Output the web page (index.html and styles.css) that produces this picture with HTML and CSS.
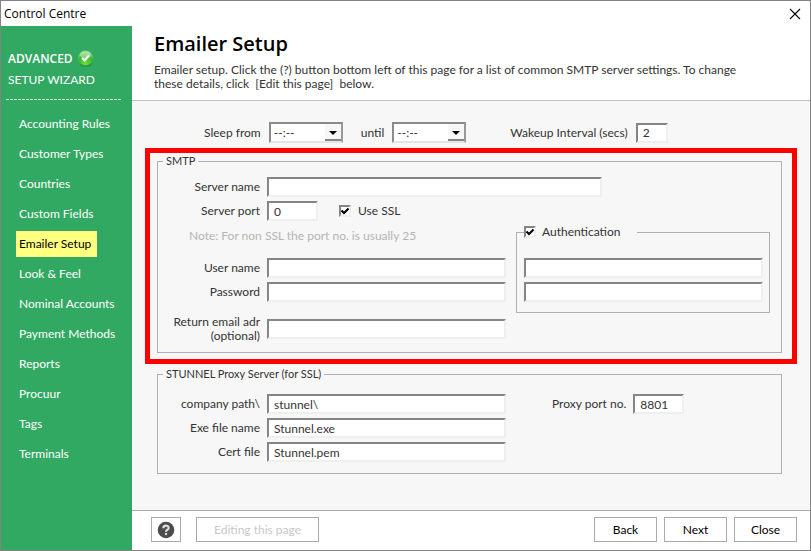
FILE: index.html
```html
<!DOCTYPE html>
<html lang="en">
<head>
  <meta charset="UTF-8">
  <title>Control Centre</title>
  <link rel="stylesheet" href="styles.css">
</head>
<body>
  <div class="window">

    <div class="titlebar">
      <span>Control Centre</span>
      <button type="button" class="close" aria-label="Close window">
        <svg width="12" height="12" viewBox="0 0 12 12"><path d="M1 1L11 11M11 1L1 11" stroke="#000" stroke-width="1.1" fill="none"/></svg>
      </button>
    </div>

    <nav class="sidebar">
      <div class="wizard">
        <strong>ADVANCED</strong>
        <svg width="18" height="18" viewBox="0 0 18 18">
          <defs>
            <radialGradient id="ball" cx="0.5" cy="0.85" r="0.8">
              <stop offset="0" stop-color="#6fe03c"/>
              <stop offset="0.6" stop-color="#35b82a"/>
              <stop offset="1" stop-color="#8fd488"/>
            </radialGradient>
          </defs>
          <ellipse cx="9" cy="14" rx="6" ry="3" fill="#1f7a3c" opacity="0.5"/>
          <circle cx="8.5" cy="8" r="7.5" fill="url(#ball)"/>
          <ellipse cx="8.5" cy="5" rx="5.5" ry="3.5" fill="#fff" opacity="0.4"/>
          <path d="M5 8L7.500 10.500L12 5.500" stroke="#fff" stroke-width="2.200" fill="none"/>
        </svg>
      </div>
      <div class="wizard">SETUP WIZARD</div>
      <hr class="dashes">
      <ul class="menu">
        <li><a href="#">Accounting Rules</a></li>
        <li><a href="#">Customer Types</a></li>
        <li><a href="#">Countries</a></li>
        <li><a href="#">Custom Fields</a></li>
        <li><a href="#" class="active">Emailer Setup</a></li>
        <li><a href="#">Look &amp; Feel</a></li>
        <li><a href="#">Nominal Accounts</a></li>
        <li><a href="#">Payment Methods</a></li>
        <li><a href="#">Reports</a></li>
        <li><a href="#">Procuur</a></li>
        <li><a href="#">Tags</a></li>
        <li><a href="#">Terminals</a></li>
      </ul>
    </nav>

    <form class="page" id="emailerForm">
      <header class="header">
        <h1>Emailer Setup</h1>
        <p>Emailer setup. Click the (?) button bottom left of this page for a list of common SMTP server settings. To change these details, click &nbsp;[Edit this page]&nbsp; below.</p>
      </header>

      <div class="content">
        <div class="sleep">
          <label for="sleepFrom">Sleep from</label>
          <select id="sleepFrom"><option>--:--</option></select>
          <label for="sleepUntil" class="until">until</label>
          <select id="sleepUntil"><option>--:--</option></select>
          <label for="wakeup" class="wakeup">Wakeup Interval (secs)</label>
          <input type="text" id="wakeup" class="tiny" value="2">
        </div>

        <div class="highlight">
          <fieldset class="group">
            <legend>SMTP</legend>
            <div class="fields server">
              <label for="serverName">Server name</label>
              <input type="text" id="serverName">
              <label for="serverPort">Server port</label>
              <div class="inline">
                <input type="text" id="serverPort" class="short" value="0">
                <input type="checkbox" id="useSsl" class="ssl" checked>
                <label for="useSsl">Use SSL</label>
              </div>
            </div>

            <div class="accounts">
              <div>
                <p class="note">Note: For non SSL the port no. is usually 25</p>
                <div class="fields">
                  <label for="userName">User name</label>
                  <input type="text" id="userName">
                  <label for="password">Password</label>
                  <input type="text" id="password">
                </div>
                <div class="fields return">
                  <label for="returnAdr">Return email adr (optional)</label>
                  <input type="text" id="returnAdr">
                </div>
              </div>
              <fieldset class="auth">
                <legend>
                  <input type="checkbox" id="auth" checked>
                  <label for="auth">Authentication</label>
                </legend>
                <input type="text" aria-label="Authentication user name">
                <input type="text" aria-label="Authentication password">
              </fieldset>
            </div>
          </fieldset>
        </div>

        <fieldset class="group stunnel">
          <legend>STUNNEL Proxy Server (for SSL)</legend>
          <div class="fields">
            <label for="companyPath">company path\</label>
            <input type="text" id="companyPath" value="stunnel\">
            <label for="exeFile">Exe file name</label>
            <input type="text" id="exeFile" value="Stunnel.exe">
            <label for="certFile">Cert file</label>
            <input type="text" id="certFile" value="Stunnel.pem">
          </div>
          <div class="inline proxy">
            <label for="proxyPort">Proxy port no.</label>
            <input type="text" id="proxyPort" class="short" value="8801">
          </div>
        </fieldset>
      </div>

      <footer class="footer">
        <button type="button" class="help" aria-label="Help">
          <svg width="18" height="18" viewBox="0 0 18 18">
            <circle cx="9" cy="9" r="8.300" fill="#4c4c4c"/>
            <path d="M6.300 7.200C6.300 3.900 11.600 3.900 11.600 6.900C11.600 8.900 9 8.600 9 10.700" stroke="#ddd" stroke-width="2.200" fill="none"/>
            <circle cx="9" cy="13" r="1.200" fill="#ddd"/>
          </svg>
        </button>
        <button type="button" class="editing" disabled>Editing this page</button>
        <button type="button" class="step back">Back</button>
        <button type="button" class="step">Next</button>
        <button type="button" class="step">Close</button>
      </footer>
    </form>

  </div>
</body>
</html>
```
FILE: styles.css
```css
* {
  box-sizing: border-box;
}
body {
  margin: 0;
  font-family: Lato, "Noto Sans", sans-serif;
  font-size: 12px;
  line-height: 14px;
  color: #333;
}
.window {
  display: grid;
  grid-template-columns: 131px 1fr;
  grid-template-rows: 25px 1fr;
  min-height: 100vh;
  border: 1px solid #838383;
  background: #fff;
}

/* title bar */
.titlebar {
  grid-column: 1 / 3;
  display: flex;
  justify-content: space-between;
  align-items: center;
  padding: 0 9px 0 3px;
  font-family: "Open Sans", sans-serif;
  color: #000;
}
.close {
  display: flex;
  padding: 0;
  border: none;
  background: none;
}

/* sidebar */
.sidebar {
  padding-top: 22px;
  background: #32a962;
  color: #fff;
}
.wizard {
  display: flex;
  align-items: center;
  gap: 4px;
  height: 21px;
  padding-left: 7px;
}
.wizard strong {
  font-family: "Open Sans", sans-serif;
  font-weight: 600;
}
.dashes {
  height: 1px;
  margin: 9px 11px 9px 5px;
  border: none;
  background: repeating-linear-gradient(to right, #d6eedf 0 3px, transparent 3px 4px);
}
.menu {
  margin: 0;
  padding: 0 0 0 15px;
  list-style: none;
}
.menu li {
  display: flex;
  align-items: center;
  height: 30px;
}
.menu a {
  padding: 6px 3px;
  color: #fff;
  text-decoration: none;
}
.menu .active {
  padding-right: 6px;
  background: #ffff80;
  color: #000;
}

/* page */
.page {
  display: flex;
  flex-direction: column;
}
.header {
  height: 75px;
  padding: 5px 48px 0 22px;
  border-bottom: 1px solid #c0c0c0;
}
h1 {
  margin: 0 0 6px;
  font-family: "Open Sans", sans-serif;
  font-size: 20px;
  font-weight: 600;
  line-height: 26px;
  color: #000;
}
.header p {
  margin: 0;
}
.content {
  flex: 1;
  padding: 21px 13px;
  background: #f7f7f7;
}
input, select, button {
  font: inherit;
  color: inherit;
}
input[type="text"] {
  width: 100%;
  height: 20px;
  padding: 0 5px;
  border: 2px solid;
  border-color: #858585 #efefef #efefef #858585;
  background: #fff;
}
input[type="checkbox"] {
  appearance: none;
  width: 12px;
  height: 12px;
  margin: 0;
  border: 2px solid;
  border-color: #858585 #efefef #efefef #858585;
  background: #fff;
}
input[type="checkbox"]:checked {
  background: #fff url("data:image/svg+xml,%3Csvg xmlns='http://www.w3.org/2000/svg' viewBox='0 0 8 8'%3E%3Cpath d='M.5 3.500L3 6L7.500 1.500' stroke='%23000' stroke-width='2' fill='none'/%3E%3C/svg%3E") center / 8px no-repeat;
}
select {
  appearance: none;
  width: 74px;
  height: 21px;
  padding: 0 3px;
  border: 2px solid #8a8a8a;
  border-right-color: #999;
  border-bottom-color: #e4e4e4;
  border-radius: 0;
  background: #fff url("data:image/svg+xml,%3Csvg xmlns='http://www.w3.org/2000/svg' viewBox='0 0 16 17'%3E%3Cpath d='M0 0H16V17H0z' fill='%23f7f7f7'/%3E%3Cpath d='M0 16H16' stroke='%23858585' stroke-width='2'/%3E%3Cpath d='M4 7H12L8 11z'/%3E%3C/svg%3E") right center / 16px 17px no-repeat;
}
.inline {
  display: flex;
  align-items: center;
}
.sleep {
  display: flex;
  align-items: center;
  gap: 8px;
  padding-left: 59px;
}
.until {
  margin-left: 10px;
}
.wakeup {
  margin-left: 36px;
}
.sleep .tiny {
  width: 32px;
}
.short {
  flex: none;
}
.inline .short {
  width: 51px;
}
.inline .ssl {
  margin: 0 7px 0 21px;
}

/* groups */
.highlight {
  margin-top: 5px;
  padding: 0 10px 6px 7px;
  border: 5px solid #f00;
}
fieldset {
  min-width: 0;
  margin: 0;
  padding: 0;
  border: 1px solid #b0b0b0;
}
.group > legend {
  margin-left: 5px;
  padding: 0 3px;
  font-size: 11px;
  line-height: 16px;
}
.fields {
  display: grid;
  grid-template-columns: 102px 1fr;
  gap: 4px 7px;
  align-items: center;
}
.fields > label {
  text-align: right;
}
.server {
  padding: 8px 179px 0 0;
}
.accounts {
  display: grid;
  grid-template-columns: 1fr 254px;
  gap: 10px;
  align-items: start;
  padding: 4px 11px 9px 0;
}
.note {
  margin: 4px 0 15px 31px;
  color: #b4b4b4;
}
.return {
  margin-top: 13px;
}
.auth {
  display: grid;
  gap: 4px;
  padding: 19px 6px 10px 7px;
}
.auth legend {
  display: flex;
  align-items: center;
  gap: 6px;
  padding: 0 16px 0 0;
}
.stunnel {
  display: grid;
  grid-template-columns: 348px 1fr;
  align-items: start;
  margin: 2px 15px 0 12px;
  padding: 12px 0 11px;
}
.proxy {
  gap: 7px;
  padding-left: 46px;
}

/* footer */
.footer {
  display: flex;
  align-items: center;
  gap: 7px;
  padding: 6px 13px 8px 19px;
  border-top: 1px solid #a8a8a8;
}
.footer button {
  height: 25px;
  padding: 0;
  border: 1px solid #aaa;
  background: #fff;
  color: #000;
}
.footer .help {
  display: flex;
  align-items: center;
  justify-content: center;
  width: 30px;
  margin-right: 8px;
}
.footer .editing {
  width: 123px;
  color: #c8c8c8;
}
.footer .step {
  width: 63px;
}
.footer .back {
  margin-left: auto;
}
```
